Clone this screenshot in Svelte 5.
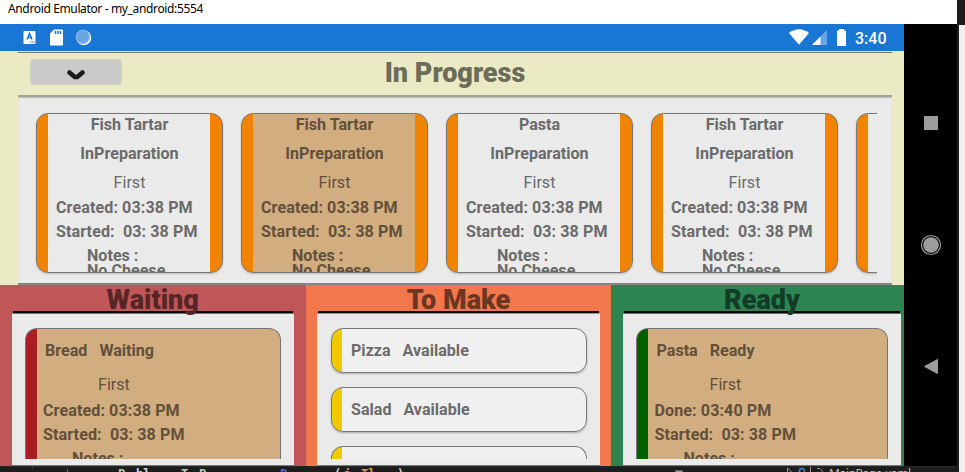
<script>
  const progress = [
    { name: 'Fish Tartar', tan: false },
    { name: 'Fish Tartar', tan: true },
    { name: 'Pasta', tan: false },
    { name: 'Fish Tartar', tan: false }
  ];
  const editor = [
    { x: 118, text: 'P', color: '#b4cdb8' },
    { x: 136, text: 'bl', color: '#c8dce8' },
    { x: 181, text: 'T', color: '#b4cdb8' },
    { x: 199, text: 'P', color: '#b4cdb8' },
    { x: 280, text: 'P', color: '#5067c8' },
    { x: 334, text: '(', color: '#d4d4d4' },
    { x: 344, text: 'i', color: '#d69a4c' },
    { x: 361, text: 'Tl', color: '#d69a4c' },
    { x: 397, text: ')', color: '#d4d4d4' }
  ];
</script>

{#snippet order(labelA, timeA)}
  <div class="course">First</div>
  <div class="time">{labelA}: {timeA} PM</div>
  <div class="time">{'Started:  03: 38 PM'}</div>
  <div class="notes">Notes :</div>
{/snippet}

<div class="desktop">
  <header class="titlebar">Android Emulator - my_android:5554</header>
  <aside class="backdrop"></aside>
  <div class="device">
    <main class="screen">
      <div class="status">
        <svg width="904" height="27" viewBox="0 0 904 27">
          <rect x="23.5" y="7" width="12" height="13" rx="1" fill="#fff" />
          <path d="M27 15.5 29.5 9.5 32 15.5M28 13.5h3" fill="none" stroke="#1976d2" stroke-width="1.5" />
          <path d="M30 18h5" stroke="#1976d2" stroke-dasharray="1.5 .6" />
          <path d="M54 5.500h8a1 1 0 0 1 1 1V20.500a1 1 0 0 1-1 1H51a1 1 0 0 1-1-1V9.500Z" fill="#fff" />
          <path d="M55.500 7v3M58 7v3M60.500 7v3" stroke="#1976d2" stroke-width="1.500" />
          <circle cx="83.800" cy="13.700" r="7.500" fill="#e6f1fb" />
          <circle cx="82.800" cy="12.800" r="7" fill="#69a6e3" />
          <circle cx="82.800" cy="12.800" r="6.700" fill="none" stroke="#a5caef" stroke-dasharray="1.500 1" />
          <path d="M789 9Q799 1.500 809 9L799 20.800Z" fill="#fff" />
          <path d="M827 6V21H812Z" fill="#69a6e3" />
          <path d="M820.500 12.500V21H812Z" fill="#fff" />
          <path d="M839 5h5v1.500h2V22h-9V6.500h2Z" fill="#fff" />
        </svg>
        <span class="clock">3:40</span>
      </div>

      <section class="progress">
        <div class="phead">
          <button class="toggle" aria-label="Toggle">
            <svg width="22" height="16" viewBox="0 0 22 16"><path d="M3.500 6.500 L8.800 11h2.400L16.500 6.500" fill="none" stroke="#1a1a1a" stroke-width="4.600" stroke-linecap="round" stroke-linejoin="round" /></svg>
          </button>
          <h1>In Progress</h1>
        </div>
        <div class="strip">
          <div class="rail">
            {#each progress as item}
              <article class="card" class:tan={item.tan}>
                <div class="name">{item.name}</div>
                <div class="state">InPreparation</div>
                {@render order('Created', '03:38')}
                <div class="notes">No Cheese</div>
              </article>
            {/each}
            <article class="card"></article>
          </div>
        </div>
      </section>

      <div class="columns">
        <section class="col waiting">
          <h2>Waiting</h2>
          <div class="list">
            <article class="ticket">
              <div class="head">{'Bread   Waiting'}</div>
              {@render order('Created', '03:38')}
            </article>
          </div>
        </section>
        <section class="col make">
          <h2>To Make</h2>
          <div class="list">
            <article class="pill">{'Pizza   Available'}</article>
            <article class="pill">{'Salad   Available'}</article>
            <article class="pill cut"></article>
          </div>
        </section>
        <section class="col ready">
          <h2>Ready</h2>
          <div class="list">
            <article class="ticket">
              <div class="head">{'Pasta   Ready'}</div>
              {@render order('Done', '03:40')}
            </article>
          </div>
        </section>
      </div>
    </main>
    <nav class="keys">
      <svg width="53" height="442" viewBox="0 0 53 442" fill="#9c9c9c">
        <rect x="20" y="92" width="14" height="14" rx=".5" />
        <circle cx="27" cy="221" r="7.800" />
        <circle cx="27" cy="221" r="9.500" fill="none" stroke="#9c9c9c" stroke-width="1.200" />
        <path d="M20.500 342.500 33.500 335.500V349.500Z" stroke="#9c9c9c" stroke-linejoin="round" />
      </svg>
    </nav>
  </div>
  <footer class="editor">
    {#each editor as t}
      <span class="code" style="left:{t.x}px;color:{t.color}">{t.text}</span>
    {/each}
    <svg class="marks" width="965" height="6" viewBox="0 0 965 6">
      <path d="M32.500 0v1M67.500 2v4" stroke="#666" />
      <path d="M674.500 3.500h9l-3 3h-3Z" fill="#999" />
      <path d="M787.500 6V1l5 5" fill="none" stroke="#999" />
      <path d="M799.500 6V4a2.500 2.500 0 0 1 5 0v2" fill="none" stroke="#3c8ad8" stroke-width="1.500" />
      <path d="M810.500 0v6M817 1.500h3l2 2V6" fill="none" stroke="#999" />
    </svg>
    <span class="file">MainPage.xaml</span>
  </footer>
</div>

<style>
  .desktop {
    width: 965px; height: 472px; overflow: hidden;
    display: grid; grid-template: 24px 442px 6px / 957px 8px;
    font-family: Roboto, sans-serif; background: #1d1d1e;
  }
  .titlebar {
    background: #fff; color: #000; padding-left: 8px;
    font: 12px/18px "Noto Sans", "Open Sans", sans-serif; letter-spacing: -0.36px; white-space: pre;
  }
  .backdrop {
    grid-column: 2; grid-row: 1 / 4; box-sizing: border-box;
    border-top: 25px solid #1c1c1d; border-left: 2px solid #1c1c1d; background: #f0f0f0;
  }
  .device { grid-row: 2; grid-column: 1; display: flex; background: #000; }
  .screen { width: 904px; height: 442px; overflow: hidden; color: #6b6b6b; }
  .keys { width: 53px; }
  svg { display: block; }
  .status { height: 27px; background: #1976d4; position: relative; }
  .clock { position: absolute; left: 855px; top: 4.500px; font: 500 16px/20px Roboto, sans-serif; color: #fff; }
  .progress {
    box-sizing: border-box; height: 234px; padding: 1px 12px 0 18px;
    background: #eaeac4;
  }
  .phead {
    box-sizing: border-box; height: 45px; position: relative;
    border-top: 1px solid #777; border-bottom: 2px solid #a3a398;
  }
  h1, h2 { margin: 0; font-weight: 900; font-size: 27px; text-align: center; }
  h1 { line-height: 40px; color: #6c6c5a; }
  .toggle {
    position: absolute; left: 12.500px; top: 7px; width: 90px; height: 24px; padding: 4px 0 0 35.500px; box-sizing: border-box;
    border: 0; border-radius: 3px; background: #c9cac9; box-shadow: 0 0 2px #999;
  }
  .strip {
    box-sizing: border-box; height: 188px; padding: 10px 15px 0 12px;
    background: #eaeaea; border-bottom: 2px solid #858585;
    box-shadow: inset 0 1px 1px #bbb;
  }
  .rail { display: flex; gap: 18px; overflow: hidden; padding: 6px 0 6px 6px; }
  .card {
    flex: 0 0 187px; height: 160px; box-sizing: border-box; overflow: hidden;
    border: 1px solid #777; border-radius: 12px; padding: 0 0 0 19px;
    background: linear-gradient(90deg, #f08400 12px, #eaeaea 12px 174px, #f08400 174px) border-box;
    font-weight: 700; font-size: 16.1px; line-height: 24px; box-shadow: 0 1px 2px #bbb;
  }
  .card.tan {
    color: #62503a;
    background: linear-gradient(90deg, #f08400 12px, #d2ad80 12px 174px, #f08400 174px) border-box;
  }
  .name, .state, .card .course { margin-left: -19px; text-align: center; }
  .name { height: 29px; line-height: 22px; }
  .state { height: 28px; line-height: 22px; }
  .course { font-weight: 400; height: 25px; line-height: 23px; }
  .time, .head { white-space: pre; }
  .time { letter-spacing: 0.09px; }
  .notes { padding: 4px 0 0 31px; line-height: 16px; }
  .notes + .notes { padding-top: 0; margin-top: -1px; }
  .columns { display: grid; grid-template-columns: 306px 305px 293px; height: 181px; }
  .col { box-sizing: border-box; padding: 0 12px 0 11.500px; }
  .waiting { background: #c05657; --bar: #a81f22; }
  .make { background: #f2784b; --bar: #eecb00; padding: 0 11px; }
  .ready { background: #2c8453; --bar: #006100; padding: 0 3px 0 12px; }
  h2 { height: 28px; line-height: 30px; margin: 0 1px 1px; border-bottom: 2px solid #000; box-sizing: border-box; }
  .waiting h2 { color: #562627; }
  .make h2 { color: #6d3622; }
  .ready h2 { color: #143b25; }
  .list {
    box-sizing: border-box; height: 152px; overflow: hidden; background: #eaeaea;
    padding: 14px 13px 0; border-bottom: 1px solid #777;
  }
  .ticket {
    box-sizing: border-box; height: 131px; overflow: hidden; padding-left: 17.500px;
    border: 1px solid #777; border-bottom: 0; border-radius: 12px 12px 0 0;
    background: linear-gradient(90deg, var(--bar) 12px, #d2ad80 12px) border-box; color: #62503a;
    font-weight: 700; font-size: 16.1px; line-height: 24px;
  }
  .head { height: 44px; padding-left: 2px; line-height: 43px; }
  .ticket .course { padding-left: 55px; height: 26px; line-height: 24px; }
  .ticket .notes { padding-left: 29px; }
  .make .list { padding-left: 14px; }
  .pill {
    box-sizing: border-box; height: 45px; margin-bottom: 14px; padding-left: 19px;
    border: 1px solid #777; border-radius: 12px; white-space: pre;
    background: linear-gradient(90deg, var(--bar) 11px, #f0f0f0 11px) border-box;
    font-weight: 700; font-size: 16.1px; line-height: 43px; box-shadow: 0 1px 2px #aaa;
  }
  .pill.cut { height: 13px; border-bottom: 0; border-radius: 12px 12px 0 0; box-shadow: none; }
  .editor { grid-row: 3; grid-column: 1; position: relative; overflow: hidden; border-top: 1px solid #272728; }
  .code { position: absolute; top: 0; font: 700 12px/15px "DejaVu Sans Mono", monospace; white-space: pre; }
  .file { position: absolute; left: 829px; top: -1px; color: #bbb; font: 12px/15px "Noto Sans", sans-serif; letter-spacing: -0.4px; }
</style>
